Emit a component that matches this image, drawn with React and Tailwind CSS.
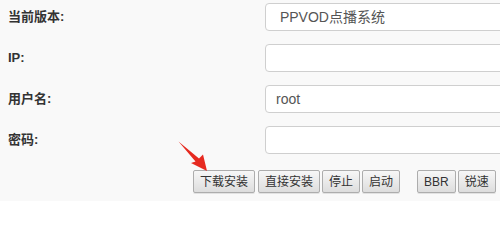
import React from 'react'

const rows = [
  { label: '当前版本:', value: ' PPVOD点播系统' },
  { label: 'IP:', value: '' },
  { label: '用户名:', value: 'root' },
  { label: '密码:', value: '' },
]

const Btn = ({ children, className = '' }) => (
  <button className={`shrink-0 whitespace-nowrap h-[23px] px-[6px] text-[12px] leading-none text-[#333] border border-[#adadad] rounded-[2px] bg-gradient-to-b from-[#f7f7f7] to-[#dddddd] shadow-[0_1px_0_#e2e2e2] ${className}`}>
    {children}
  </button>
)

const App = () => {
  return (
    <div
      className="relative w-[500px] h-[201px] overflow-hidden bg-[#f9f9f9]"
      style={{ fontFamily: '"Liberation Sans", "Noto Sans CJK SC", sans-serif' }}
    >
      <div className="flex flex-col gap-[13px] pt-[3px]">
        {rows.map((r) => (
          <div key={r.label} className="flex items-center h-[28px]">
            <div className="w-[265px] shrink-0 pl-2 text-[13px] font-bold text-[#333]">{r.label}</div>
            <div className="w-[260px] shrink-0 h-[28px] flex items-center px-[10px] bg-white border border-[#cfcfcf] rounded-[4px] text-[14px] text-[#555] whitespace-pre">
              {r.value}
            </div>
          </div>
        ))}
      </div>

      {/* Buttons */}
      <div className="flex items-center mt-[16px] pl-[193px] gap-[2px]">
        <Btn className="mr-[1px]">下载安装</Btn>
        <Btn>直接安装</Btn>
        <Btn>停止</Btn>
        <Btn>启动</Btn>
        <Btn className="ml-[15px]">BBR</Btn>
        <Btn>锐速</Btn>
      </div>

      {/* red arrow */}
      <svg className="absolute left-[170px] top-[135px]" width="45" height="45" viewBox="0 0 45 45">
        <polygon
          points="8.5,6.5 29,23.5 33,19.5 37,36 21,28 25.5,26.5"
          fill="#e62a20"
        />
      </svg>
    </div>
  )
}

export default App
